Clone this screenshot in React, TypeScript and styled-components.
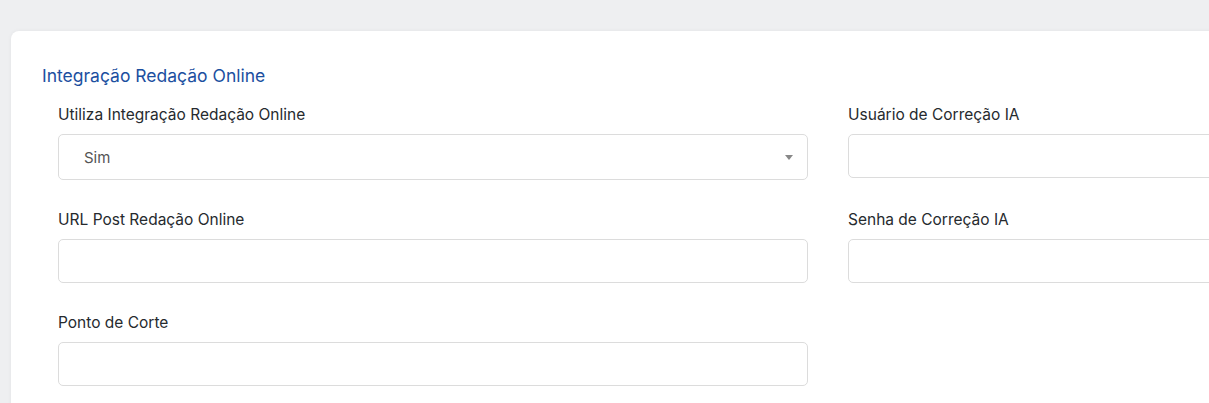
import React from "react";
import styled, { createGlobalStyle } from "styled-components";

const GlobalStyle = createGlobalStyle`
  html, body {
    margin: 0;
    padding: 0;
    background: #eeeff1;
    overflow: hidden;
  }
  body {
    font-family: "Inter", "Liberation Sans", sans-serif;
    color: #212529;
  }
`;

type Field = {
  label: string;
  kind: "select" | "input";
  value?: string;
};

const fields: Field[] = [
  { label: "Utiliza Integração Redação Online", kind: "select", value: "Sim" },
  { label: "Usuário de Correção IA", kind: "input" },
  { label: "URL Post Redação Online", kind: "input" },
  { label: "Senha de Correção IA", kind: "input" },
  { label: "Ponto de Corte", kind: "input" },
];

export default function App() {
  return (
    <>
      <GlobalStyle />
      <Page>
        <Card>
          <Title>Integração Redação Online</Title>
          <FieldGrid>
            {fields.map((f) => (
              <FieldGroup key={f.label}>
                <Label>{f.label}</Label>
                {f.kind === "select" ? (
                  <SelectBox>
                    <SelectValue>{f.value}</SelectValue>
                    <Caret width="8" height="5" viewBox="0 0 8 5">
                      <path d="M0 0h8L4 5z" fill="#888" />
                    </Caret>
                  </SelectBox>
                ) : (
                  <Input type="text" />
                )}
              </FieldGroup>
            ))}
          </FieldGrid>
        </Card>
      </Page>
    </>
  );
}

const Page = styled.div`
  box-sizing: border-box;
  width: 100vw;
  height: 100vh;
  overflow: hidden;
  padding: 31px 0 0 11px;
`;

const Card = styled.section`
  background: #fff;
  border-radius: 8px;
  box-shadow: 0 0 4px rgba(0, 0, 0, 0.05);
  padding: 29px 31px 40px;
  width: 1640px;
  min-height: 400px;
`;

const Title = styled.h2`
  margin: 0;
  font-size: 17.5px;
  font-weight: 400;
  line-height: 32px;
  color: #1c4f9f;
`;

const FieldGrid = styled.div`
  display: grid;
  grid-template-columns: 750px 750px;
  column-gap: 40px;
  row-gap: 29px;
  margin: 12px 0 0 16px;
`;

const FieldGroup = styled.div`
  display: flex;
  flex-direction: column;
`;

const Label = styled.label`
  font-size: 15.5px;
  line-height: 22px;
  color: #262a2e;
  margin-bottom: 8px;
`;

const SelectBox = styled.div`
  display: flex;
  align-items: center;
  justify-content: space-between;
  height: 46px;
  box-sizing: border-box;
  border: 1px solid #dcdcdc;
  border-radius: 5px;
  padding: 0 14px 0 25px;
  background: #fff;
`;

const SelectValue = styled.span`
  font-size: 15px;
  color: #555;
`;

const Caret = styled.svg`
  display: block;
`;

const Input = styled.input`
  height: 44px;
  box-sizing: border-box;
  border: 1px solid #dcdcdc;
  border-radius: 5px;
  background: #fff;
  outline: none;
  padding: 0 12px;
  font: inherit;
`;
